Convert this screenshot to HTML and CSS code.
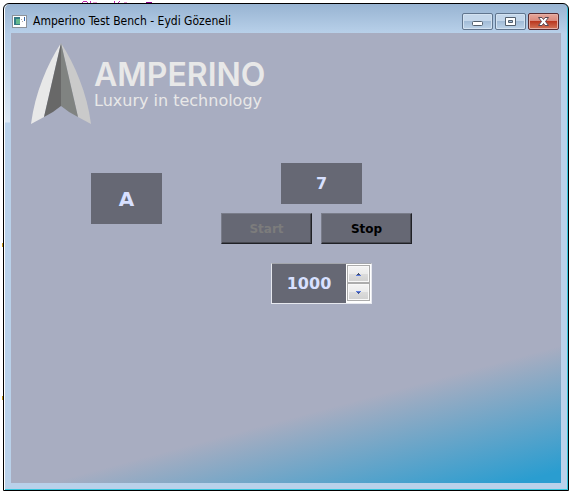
FILE: index.html
```html
<!DOCTYPE html>
<html lang="en">
<head>
<meta charset="utf-8">
<title>Amperino Test Bench - Eydi Gözeneli</title>
<link rel="stylesheet" href="styles.css">
</head>
<body>
<svg class="backdrop" width="170" height="410" viewBox="0 0 170 410" aria-hidden="true" shape-rendering="crispEdges">
  <path fill="#c030b0" d="M83 1h4v1h-4zM82 2h1v1h-1zM87 2h1v1h-1zM90 1h1v2h-1zM114 1h1v2h-1zM119 1h1v1h-1zM118 2h1v1h-1z"/>
  <path fill="#e9a0d8" d="M93 2h4v1h-4zM124 2h3v1h-3z"/>
  <path fill="#8b008b" d="M146 2h6v1h-6z"/>
  <path fill="#c79a1c" d="M2 243h1v4h-1zM2 396h1v4h-1z"/>
</svg>
<main class="window">
  <header class="titlebar">
    <svg class="app-icon" width="15" height="13" viewBox="0 0 15 13" aria-hidden="true">
      <rect x=".5" y=".5" width="14" height="12" fill="#fff" stroke="#8c9299"/>
      <path fill="#357b86" d="M2 2h6v8H2z"/>
      <path fill="#65b98e" d="M4 4h4v5H4z"/>
      <path fill="#3767a8" d="M12 2h1v4h-1z"/>
      <path fill="#aaa" d="M9 4h1v1H9zM10 6h1v1h-1z"/>
    </svg>
    <h1 class="title">Amperino Test Bench - Eydi Gözeneli</h1>
    <div class="caption-buttons">
      <button class="caption" type="button" aria-label="Minimize">
        <svg width="11" height="9" viewBox="0 0 11 9"><rect x=".5" y="4.5" width="10" height="4" rx="1" fill="#fff" stroke="#53606e"/></svg>
      </button>
      <button class="caption" type="button" aria-label="Maximize">
        <svg width="11" height="9" viewBox="0 0 11 9"><path fill="#fff" stroke="#53606e" fill-rule="evenodd" d="M.5.5h10v8H.5zM3.500 3.500h4v2h-4z"/></svg>
      </button>
      <button class="caption close" type="button" aria-label="Close">
        <svg width="13" height="11" viewBox="0 0 13 11"><path fill="#fff" stroke="#5a4650" d="M1.500 1.500h3.500l1.500 2 1.500-2h3.500L8.500 5.500l3 4H8l-1.500-2-1.500 2H1.500l3-4z"/></svg>
      </button>
    </div>
  </header>
  <section class="client">
    <div class="brand">
      <svg width="62" height="82" viewBox="0 0 62 82" aria-hidden="true">
        <path fill="#e8e8e8" d="M31 0C17 22 5 50 1 81l13-7z"/>
        <path fill="#cacaca" d="M31 0c14 22 26 50 30 81l-13-7z"/>
        <path fill="#686868" d="M31 0L14 74q10-5 17-11z"/>
        <path fill="#808381" d="M31 0l17 74q-10-5-17-11z"/>
      </svg>
      <div class="brand-text">
        <p class="brand-name">AMPERINO</p>
        <p class="brand-tag">Luxury in technology</p>
      </div>
    </div>
    <div class="bench">
      <output class="tile channel">A</output>
      <div class="controls">
        <output class="tile reading">7</output>
        <div class="actions">
          <button class="action" type="button" disabled>Start</button>
          <button class="action" type="button">Stop</button>
        </div>
        <div class="spin">
          <input class="spin-value" type="text" inputmode="numeric" value="1000" aria-label="Interval">
          <div class="spin-buttons">
            <button class="step" type="button" aria-label="Increase"><svg width="5" height="3" viewBox="0 0 5 3" shape-rendering="crispEdges"><path fill="#42506e" d="M2 0h1v1h1v1H1V1h1z"/><path fill="#5c7ce0" d="M0 2h5v1H0z"/></svg></button>
            <button class="step" type="button" aria-label="Decrease"><svg width="5" height="3" viewBox="0 0 5 3" shape-rendering="crispEdges"><path fill="#5c7ce0" d="M0 0h5v1H0z"/><path fill="#3d55a0" d="M1 1h3v1H3v1H2V2H1z"/></svg></button>
          </div>
        </div>
      </div>
    </div>
  </section>
</main>
</body>
</html>
```
FILE: styles.css
```css
* {
  box-sizing: border-box;
}

body {
  display: flex;
  min-height: 100vh;
  margin: 0;
  padding: 3px 5px 4px 3px;
  background: #fff;
  font-family: "DejaVu Sans", sans-serif;
}

button,
input {
  margin: 0;
  padding: 0;
  font-family: inherit;
}

svg {
  display: block;
}

.backdrop {
  position: absolute;
  top: 0;
  left: 0;
}

.window {
  position: relative;
  display: flex;
  flex: 1;
  flex-direction: column;
  padding: 0 7px 7px;
  border: 1px solid #000;
  border-radius: 6px 6px 0 0;
  background:
    linear-gradient(#99b4d1, #b4cce6 30px, #dce8f4 118px, transparent 119px) left / 6px 100% no-repeat,
    linear-gradient(#98b4d2, #b9d1ea 30px);
  box-shadow: inset 1px 0 #fff, inset -1px -1px #35c5dc;
}

.titlebar {
  display: flex;
  align-items: center;
  gap: 6px;
  height: 29px;
  padding: 5px 2px 0 1px;
}

.title {
  flex: 1;
  margin: 0;
  color: #000;
  font: 12px/16px "DejaVu Sans Condensed", "DejaVu Sans", sans-serif;
}

.caption-buttons {
  display: flex;
  gap: 2px;
}

.caption {
  display: flex;
  align-items: center;
  justify-content: center;
  width: 31px;
  height: 17px;
  border: 1px solid #60758e;
  border-radius: 2px;
  background: linear-gradient(#c4d7eb 50%, #a2bcd7 50%, #bcd3e9);
  box-shadow: inset 0 0 0 1px #d3e2f1;
}

.close {
  border-color: #572c32;
  background: linear-gradient(#e6a79b, #d98679 50%, #ba3820 50%, #d3765a);
  box-shadow: inset 0 0 0 1px #e6afa5;
}

.client {
  flex: 1;
  background: linear-gradient(165deg, #a8adc1 77%, #2a9dd0 98%);
}

.brand {
  display: flex;
  gap: 2px;
  padding: 10px 19px 0;
}

.brand-text {
  padding-top: 16px;
  color: #e8e8e8;
}

.brand-name,
.brand-tag {
  margin: 0;
}

.brand-name {
  font: 600 32px/32px Inter, sans-serif;
}

.brand-tag {
  font: 16px/20px "DejaVu Sans", sans-serif;
}

.bench {
  display: flex;
  gap: 59px;
  padding: 38px 80px 0;
}

.tile {
  display: flex;
  align-items: center;
  justify-content: center;
  background: #666874;
  color: #d8e0ff;
  font-weight: bold;
}

.channel {
  width: 71px;
  height: 51px;
  margin-top: 10px;
  font-size: 20px;
}

.controls {
  display: flex;
  flex-direction: column;
  gap: 9px;
}

.reading {
  width: 81px;
  height: 41px;
  margin-left: 60px;
  font-size: 16px;
}

.actions {
  display: flex;
  gap: 9px;
}

.action {
  width: 91px;
  height: 31px;
  border: 1px solid;
  border-color: #7a7d8a #202126 #202126 #7a7d8a;
  background: #666874;
  box-shadow: inset -1px -1px #474850;
  color: #000;
  font-size: 12px;
  font-weight: bold;
}

.action:disabled {
  color: #7c7c7c;
}

.spin {
  display: flex;
  width: 101px;
  height: 41px;
  margin: 10px 0 0 50px;
  border: 1px solid;
  border-color: #a3a6ac #e6e8ef #e6e8ef;
  background: #fff;
}

.spin-value {
  width: 74px;
  border: 0;
  background: #666874;
  color: #d8e0ff;
  font-size: 16px;
  font-weight: bold;
  text-align: center;
}

.spin-buttons {
  display: flex;
  flex: 1;
  flex-direction: column;
  padding: 1px 1px 2px;
}

.step {
  display: flex;
  flex: 1;
  align-items: center;
  justify-content: center;
  border: 1px solid #acacac;
  background: linear-gradient(#f4f4f4, #ebebeb 50%, #dcdcdc 50%, #d0d0d0);
  box-shadow: inset 0 0 0 1px #f8f8f8;
}
```
